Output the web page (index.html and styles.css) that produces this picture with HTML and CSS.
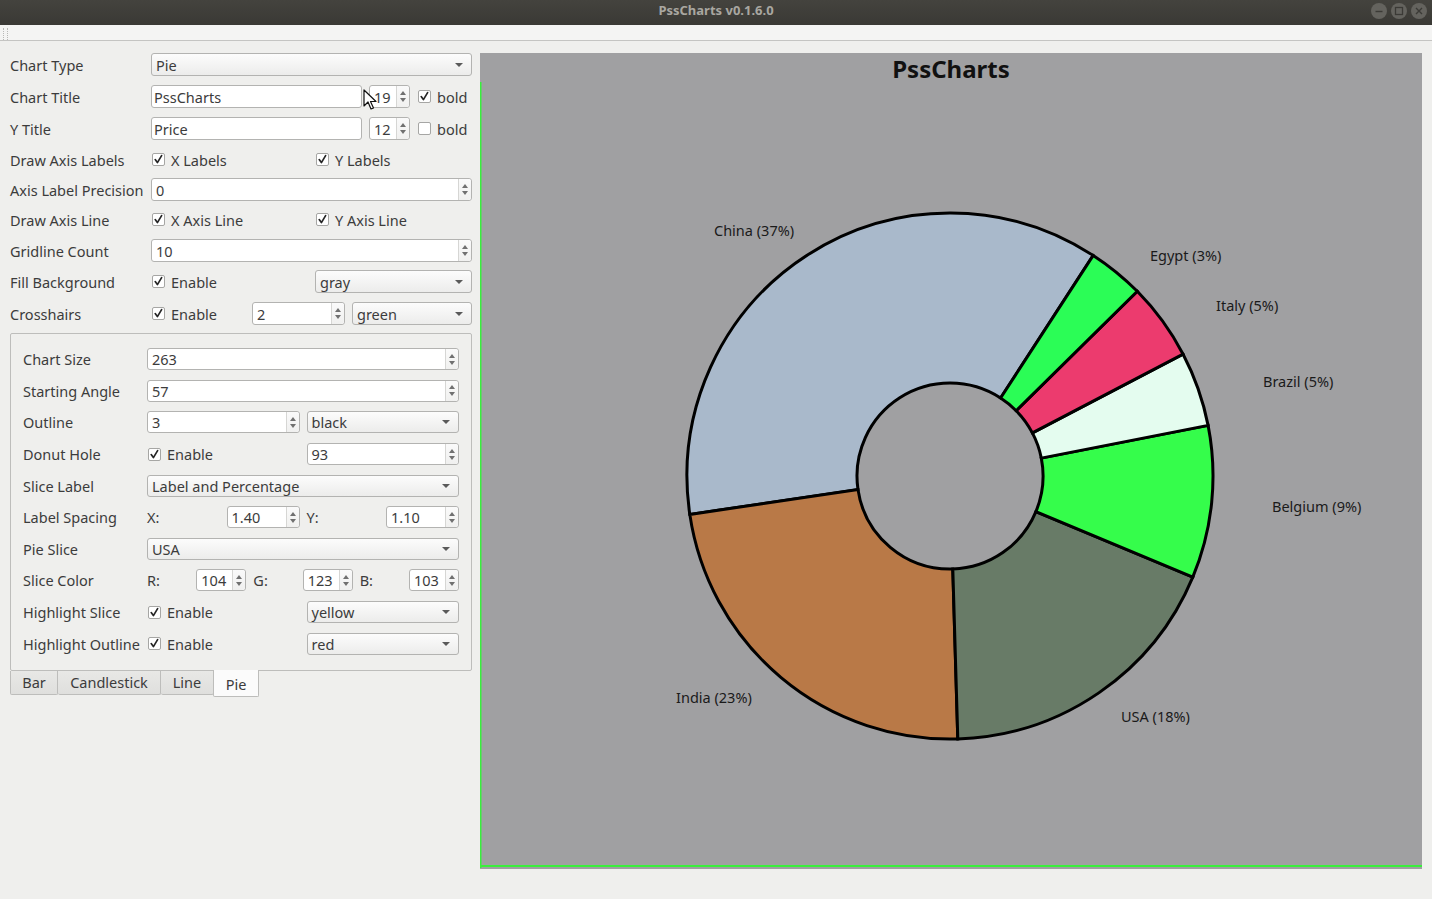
FILE: index.html
```html
<!DOCTYPE html>
<html>
<head>
<meta charset="utf-8">
<title>PssCharts v0.1.6.0</title>
<link rel="stylesheet" href="styles.css">
</head>
<body>
<div class="window">
  <div class="titlebar">
    <span></span>
    <span class="wtitle">PssCharts v0.1.6.0</span>
    <div class="wbtns">
      <span class="wbtn"><svg width="16" height="16" viewBox="0 0 16 16"><path d="M4.5 8.5h7" stroke="#3b3a36" stroke-width="1.4"/></svg></span>
      <span class="wbtn"><svg width="16" height="16" viewBox="0 0 16 16"><rect x="4.5" y="4.5" width="7" height="7" fill="none" stroke="#3b3a36" stroke-width="1.3"/></svg></span>
      <span class="wbtn"><svg width="16" height="16" viewBox="0 0 16 16"><path d="M5 5l6 6M11 5l-6 6" stroke="#3b3a36" stroke-width="1.4"/></svg></span>
    </div>
  </div>
  <div class="toolbar"><span class="grip"></span></div>

  <div class="main">
    <div class="panel">
      <div class="form">
        <div class="lbl">Chart Type</div>
        <div class="combo">Pie</div>

        <div class="lbl">Chart Title</div>
        <div class="hrow">
          <div class="edit w211">PssCharts</div>
          <div class="spin w41"><span class="val">19</span><span class="arrows"><i class="up"></i><i class="dn"></i></span></div>
          <label class="check"><span class="box on"></span>bold</label>
        </div>

        <div class="lbl">Y Title</div>
        <div class="hrow">
          <div class="edit w211">Price</div>
          <div class="spin w41"><span class="val">12</span><span class="arrows"><i class="up"></i><i class="dn"></i></span></div>
          <label class="check"><span class="box"></span>bold</label>
        </div>

        <div class="lbl">Draw Axis Labels</div>
        <div class="half2">
          <label class="check"><span class="box on"></span>X Labels</label>
          <label class="check"><span class="box on"></span>Y Labels</label>
        </div>

        <div class="lbl">Axis Label Precision</div>
        <div class="spin"><span class="val">0</span><span class="arrows"><i class="up"></i><i class="dn"></i></span></div>

        <div class="lbl">Draw Axis Line</div>
        <div class="half2">
          <label class="check"><span class="box on"></span>X Axis Line</label>
          <label class="check"><span class="box on"></span>Y Axis Line</label>
        </div>

        <div class="lbl">Gridline Count</div>
        <div class="spin"><span class="val">10</span><span class="arrows"><i class="up"></i><i class="dn"></i></span></div>

        <div class="lbl">Fill Background</div>
        <div class="half2">
          <label class="check"><span class="box on"></span>Enable</label>
          <div class="combo">gray</div>
        </div>

        <div class="lbl">Crosshairs</div>
        <div class="hrow">
          <label class="check w94"><span class="box on"></span>Enable</label>
          <div class="spin w93"><span class="val">2</span><span class="arrows"><i class="up"></i><i class="dn"></i></span></div>
          <div class="combo grow">green</div>
        </div>
      </div>

      <div class="tabwidget">
        <div class="pane">
          <div class="lbl">Chart Size</div>
          <div class="spin h22"><span class="val">263</span><span class="arrows"><i class="up"></i><i class="dn"></i></span></div>

          <div class="lbl">Starting Angle</div>
          <div class="spin h22"><span class="val">57</span><span class="arrows"><i class="up"></i><i class="dn"></i></span></div>

          <div class="lbl">Outline</div>
          <div class="half2">
            <div class="spin h22"><span class="val">3</span><span class="arrows"><i class="up"></i><i class="dn"></i></span></div>
            <div class="combo h22">black</div>
          </div>

          <div class="lbl">Donut Hole</div>
          <div class="half2">
            <label class="check"><span class="box on"></span>Enable</label>
            <div class="spin h22"><span class="val">93</span><span class="arrows"><i class="up"></i><i class="dn"></i></span></div>
          </div>

          <div class="lbl">Slice Label</div>
          <div class="combo h22">Label and Percentage</div>

          <div class="lbl">Label Spacing</div>
          <div class="half2">
            <div class="pair"><span>X:</span><div class="spin h22 w73"><span class="val">1.40</span><span class="arrows"><i class="up"></i><i class="dn"></i></span></div></div>
            <div class="pair"><span>Y:</span><div class="spin h22 w73"><span class="val">1.10</span><span class="arrows"><i class="up"></i><i class="dn"></i></span></div></div>
          </div>

          <div class="lbl">Pie Slice</div>
          <div class="combo h22">USA</div>

          <div class="lbl">Slice Color</div>
          <div class="third3">
            <div class="pair"><span>R:</span><div class="spin h22 w50"><span class="val">104</span><span class="arrows"><i class="up"></i><i class="dn"></i></span></div></div>
            <div class="pair"><span>G:</span><div class="spin h22 w50"><span class="val">123</span><span class="arrows"><i class="up"></i><i class="dn"></i></span></div></div>
            <div class="pair"><span>B:</span><div class="spin h22 w50"><span class="val">103</span><span class="arrows"><i class="up"></i><i class="dn"></i></span></div></div>
          </div>

          <div class="lbl">Highlight Slice</div>
          <div class="half2">
            <label class="check"><span class="box on"></span>Enable</label>
            <div class="combo h22">yellow</div>
          </div>

          <div class="lbl">Highlight Outline</div>
          <div class="half2">
            <label class="check"><span class="box on"></span>Enable</label>
            <div class="combo h22">red</div>
          </div>
        </div>
        <div class="tabs">
          <span class="tab t-bar">Bar</span>
          <span class="tab t-candle">Candlestick</span>
          <span class="tab t-line">Line</span>
          <span class="tab t-pie sel">Pie</span>
        </div>
      </div>
    </div>

    <div class="chart">
      <svg class="plot" width="942" height="816" viewBox="0 0 942 816">
        <text class="ctitle" x="471" y="25" text-anchor="middle">PssCharts</text>
        <g stroke="#000" stroke-width="3" stroke-linejoin="miter">
          <path fill="#a9b9cb" d="M613.2,202.4 A263,263 0 0 0 209.8,461.4 L378.0,436.6 A93,93 0 0 1 520.6,345.0 Z"/>
          <path fill="#b97947" d="M209.8,461.4 A263,263 0 0 0 477.8,685.9 L472.8,516.0 A93,93 0 0 1 378.0,436.6 Z"/>
          <path fill="#687b67" d="M477.8,685.9 A263,263 0 0 0 712.8,524.1 L555.9,458.7 A93,93 0 0 1 472.8,516.0 Z"/>
          <path fill="#35fd4b" d="M712.8,524.1 A263,263 0 0 0 728.1,372.4 L561.3,405.1 A93,93 0 0 1 555.9,458.7 Z"/>
          <path fill="#e4fcef" d="M728.1,372.4 A263,263 0 0 0 703.1,301.2 L552.4,379.9 A93,93 0 0 1 561.3,405.1 Z"/>
          <path fill="#ec3b6e" d="M703.1,301.2 A263,263 0 0 0 657.3,238.3 L536.2,357.7 A93,93 0 0 1 552.4,379.9 Z"/>
          <path fill="#2bfd56" d="M657.3,238.3 A263,263 0 0 0 613.2,202.4 L520.6,345.0 A93,93 0 0 1 536.2,357.7 Z"/>
        </g>
        <g class="slabel">
          <text x="234" y="183">China (37%)</text>
          <text x="670" y="208">Egypt (3%)</text>
          <text x="736" y="258">Italy (5%)</text>
          <text x="783" y="334">Brazil (5%)</text>
          <text x="792" y="459">Belgium (9%)</text>
          <text x="641" y="669">USA (18%)</text>
          <text x="196" y="650">India (23%)</text>
        </g>
        <line x1="0.5" y1="29" x2="0.5" y2="815" stroke="#39f03c" stroke-width="2"/>
        <line x1="0" y1="813" x2="942" y2="813" stroke="#39f03c" stroke-width="2"/>
      </svg>
    </div>
  </div>

  <svg class="cursor" width="14" height="22" viewBox="0 0 14 22">
    <path d="M1 1 L1 17 L5 13 L8 20 L10.5 19 L7.5 12.5 L13 12.5 Z" fill="#fff" stroke="#111" stroke-width="1.2" stroke-linejoin="round"/>
  </svg>
</div>
</body>
</html>
```

FILE: styles.css
```css
html, body {
  margin: 0;
  padding: 0;
}
body {
  width: 1432px;
  height: 899px;
  overflow: hidden;
  background: #efefed;
  font-family: "Noto Sans", "DejaVu Sans", sans-serif;
  font-size: 14.5px;
  color: #3c3c3c;
}
.window {
  position: relative;
  width: 1432px;
  height: 899px;
}

/* title bar */
.titlebar {
  height: 25px;
  background: linear-gradient(#44433e, #3a3935);
  display: grid;
  grid-template-columns: 1fr auto 1fr;
  align-items: center;
}
.wtitle {
  color: #a9a7a1;
  font-weight: bold;
  font-size: 13px;
  padding-bottom: 5px;
}
.wbtns {
  justify-self: end;
  display: flex;
  gap: 4px;
  padding-right: 5px;
  margin-top: -4px;
}
.wbtn {
  width: 16px;
  height: 16px;
  border-radius: 50%;
  background: #64635e;
  display: flex;
}

/* toolbar strip */
.toolbar {
  height: 15px;
  background: #f4f4f3;
  border-bottom: 1px solid #c4c4c2;
  display: flex;
  align-items: flex-end;
}
.grip {
  width: 3px;
  height: 12px;
  margin-left: 3px;
  border-left: 1px dotted #b8b8b6;
  border-right: 1px dotted #b8b8b6;
}

/* main */
.main {
  display: flex;
  align-items: flex-start;
  padding: 8px 10px 0 10px;
}
.panel {
  width: 462px;
  flex: none;
}
.form {
  display: grid;
  grid-template-columns: 141px 321px;
  grid-template-rows: 31px 33px 31px 31px 29px 31px 31px 31px 33px;
  align-items: center;
}
.lbl {
  white-space: nowrap;
}

/* widgets */
.combo, .edit, .spin {
  box-sizing: border-box;
  height: 23px;
  border: 1px solid #b3b3b1;
  border-radius: 3px;
  display: flex;
  align-items: center;
  white-space: nowrap;
}
.combo {
  background: linear-gradient(#fcfcfc, #ececeb);
  padding-left: 4px;
}
.combo::after {
  content: "";
  margin-left: auto;
  margin-right: 8px;
  border-top: 4px solid #5a5a5a;
  border-left: 4px solid transparent;
  border-right: 4px solid transparent;
}
.edit {
  background: #fff;
  padding-left: 2px;
}
.spin {
  background: #fff;
}
.spin .val {
  flex: 1;
  padding-left: 4px;
}
.spin .arrows {
  width: 12px;
  align-self: stretch;
  border-left: 1px solid #d6d6d4;
  display: flex;
  flex-direction: column;
  align-items: center;
  justify-content: center;
  gap: 3px;
  background: linear-gradient(#fafafa, #f0f0ef);
  border-radius: 0 3px 3px 0;
}
.arrows i {
  display: block;
  width: 0;
  height: 0;
  border-left: 3px solid transparent;
  border-right: 3px solid transparent;
}
.arrows .up { border-bottom: 4px solid #707070; }
.arrows .dn { border-top: 4px solid #707070; }

.h22 { height: 22px; }
.w211 { width: 211px; flex: none; }
.w41 { width: 41px; flex: none; }
.w93 { width: 93px; flex: none; }
.w94 { width: 94px; flex: none; box-sizing: border-box; }
.w73 { width: 73px; flex: none; }
.w50 { width: 50px; flex: none; }
.grow { flex: 1; }

.hrow {
  display: flex;
  align-items: center;
  gap: 7px;
}
.half2 {
  display: grid;
  grid-template-columns: 1fr 1fr;
  column-gap: 7px;
  align-items: center;
}
.third3 {
  display: grid;
  grid-template-columns: 1fr 1fr 1fr;
  column-gap: 7px;
  align-items: center;
}
.pair {
  display: flex;
  align-items: center;
  justify-content: space-between;
}

.check {
  display: flex;
  align-items: center;
  gap: 6px;
  white-space: nowrap;
  padding-left: 1px;
}
.box {
  box-sizing: border-box;
  width: 13px;
  height: 13px;
  border: 1px solid #a6a6a4;
  border-radius: 2px;
  background: #fff;
  flex: none;
}
.box.on {
  background: #fff url("data:image/svg+xml;utf8,<svg xmlns='http://www.w3.org/2000/svg' width='11' height='11' viewBox='0 0 11 11'><path d='M2.2 5.6 L4.4 8.6 L8.6 1.6' fill='none' stroke='%23262626' stroke-width='1.7' stroke-linecap='round' stroke-linejoin='round'/></svg>") center / 11px 11px no-repeat;
}

/* tab widget */
.tabwidget {
  margin-top: 3px;
}
.pane {
  box-sizing: border-box;
  width: 462px;
  border: 1px solid #bdbdbb;
  border-radius: 2px;
  padding: 9.5px 12px 10.5px 12px;
  display: grid;
  grid-template-columns: 124px 312px;
  grid-auto-rows: 31.6px;
  align-items: center;
  background: #efefed;
}
.tabs {
  display: flex;
  align-items: flex-start;
}
.tab {
  box-sizing: border-box;
  height: 24px;
  display: flex;
  align-items: center;
  justify-content: center;
  border: 1px solid #bdbdbb;
  border-top: none;
  border-left: none;
  background: linear-gradient(#e8e8e6, #dfdfdd);
  border-radius: 0 0 2px 2px;
}
.t-bar { width: 48px; border-left: 1px solid #bdbdbb; }
.t-candle { width: 103px; }
.t-line { width: 53px; }
.t-pie { width: 45px; }
.tab.sel {
  background: #fbfbfb;
  height: 27px;
  margin-top: -1px;
  padding-top: 2px;
  border-left: 1px solid #bdbdbb;
  margin-left: -1px;
  width: 46px;
}

/* chart */
.chart {
  margin-top: 4px;
  margin-left: 8px;
  width: 942px;
  height: 816px;
  background: #a0a0a2;
  flex: none;
}
.plot {
  display: block;
}
.ctitle {
  font-family: "Noto Sans", sans-serif;
  font-weight: bold;
  font-size: 24px;
  fill: #111;
}
.slabel text {
  font-family: "Noto Sans", sans-serif;
  font-size: 14.5px;
  fill: #1a1a1a;
}

/* mouse pointer overlay */
.cursor {
  position: absolute;
  left: 363px;
  top: 89px;
}
```
